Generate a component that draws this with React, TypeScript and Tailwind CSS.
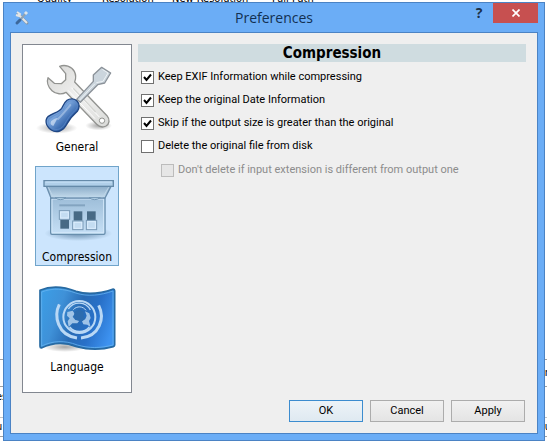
import { useState } from 'react'

const sections = [
  { name: 'General', Icon: ToolsIcon },
  { name: 'Compression', Icon: ScannerIcon },
  { name: 'Language', Icon: FlagIcon },
]

function ToolsIcon() {
  return (
    <svg viewBox="45 48 252 246" className="w-full" aria-hidden="true">
      <defs>
        <linearGradient id="handle" x1="0" y1="0" x2="1" y2="1">
          <stop offset="0" stopColor="#2c5a9c" />
          <stop offset="0.4" stopColor="#7aa5dc" />
          <stop offset="0.65" stopColor="#3a6bb0" />
          <stop offset="1" stopColor="#204a87" />
        </linearGradient>
        <linearGradient id="steel" x1="0" y1="0" x2="1" y2="1">
          <stop offset="0" stopColor="#d6d6d4" />
          <stop offset="0.5" stopColor="#f1f1f0" />
          <stop offset="1" stopColor="#d9dad8" />
        </linearGradient>
        <radialGradient id="toolShadow">
          <stop offset="0" stopColor="#000" stopOpacity="0.35" />
          <stop offset="1" stopColor="#000" stopOpacity="0" />
        </radialGradient>
      </defs>
      <ellipse cx="110" cy="264" rx="62" ry="17" fill="url(#toolShadow)" />
      <ellipse cx="236" cy="257" rx="40" ry="14" fill="url(#toolShadow)" />
      <path
        d="M119 79 C134 73 155 78 163 94 C169 106 168 116 164 126 L261 227 C271 239 268 252 258 258 C248 263 237 260 230 253 L138 157 C126 164 108 163 96 152 C83 140 80 124 84 113 L103 130 L124 131 L137 119 L137 101 Z"
        fill="url(#steel)"
        stroke="#929390"
        strokeWidth="4"
        strokeLinejoin="round"
      />
      <path d="M154 143 L238 231 M144 151 L225 236" stroke="#fff" strokeWidth="3" fill="none" />
      <path d="M160 145 L227 216" stroke="#d3d4d1" strokeWidth="4" fill="none" />
      <circle cx="246" cy="242" r="8" fill="#fff" stroke="#929390" strokeWidth="3" />
      <path
        d="M245 82 L272 99 L254 129 L233 134 L181 187 L170 178 L220 124 L220 105 Z"
        fill="#cbd5dd"
        stroke="#8b9299"
        strokeWidth="4"
        strokeLinejoin="round"
      />
      <path d="M247 88 L264 99 L249 124 L229 128 M225 131 L179 180" stroke="#edf2f5" strokeWidth="3" fill="none" />
      <path
        d="M141 181 C149 175 164 175 171 183 C179 191 179 204 172 214 C158 226 148 238 139 255 C130 272 110 281 94 270 C76 258 74 239 85 229 C100 219 117 216 125 205 C130 196 133 187 141 181 Z"
        fill="url(#handle)"
        stroke="#1f4684"
        strokeWidth="4"
      />
      <path
        d="M143 187 C151 180 163 181 168 188 C173 194 173 203 167 210 C152 223 143 236 134 252 C126 267 110 273 97 265 C82 256 82 243 89 235 C105 225 122 220 130 208 C135 198 136 193 143 187 Z"
        fill="none"
        stroke="#5e8ac8"
        strokeWidth="2"
      />
      <path d="M151 195 C137 212 129 222 114 237" fill="none" stroke="#c1d6f0" strokeWidth="6" strokeLinecap="round" opacity="0.5" />
      <path d="M94 243 C101 237 107 235 113 234 L100 258 C91 255 90 249 94 243 Z" fill="#e6f0fb" opacity="0.6" />
    </svg>
  )
}

function ScannerIcon() {
  return (
    <svg viewBox="45 33 252 246" className="w-full" aria-hidden="true">
      <defs>
        <linearGradient id="lid" x1="0" y1="0" x2="0" y2="1">
          <stop offset="0" stopColor="#8bacc8" />
          <stop offset="1" stopColor="#c5dced" />
        </linearGradient>
        <linearGradient id="glass" x1="0" y1="0" x2="0" y2="1">
          <stop offset="0" stopColor="#9dbdd8" />
          <stop offset="1" stopColor="#c6e0f6" />
        </linearGradient>
        <radialGradient id="scannerShadow">
          <stop offset="0" stopColor="#486f91" stopOpacity="0.75" />
          <stop offset="1" stopColor="#486f91" stopOpacity="0" />
        </radialGradient>
      </defs>
      <ellipse cx="175" cy="235" rx="102" ry="23" fill="url(#scannerShadow)" />
      <path d="M92 127 H255 V234 Q255 238 251 238 H96 Q92 238 92 234 Z" fill="url(#glass)" stroke="#688ead" strokeWidth="4" />
      <path d="M96 132 H251 V233 H96 Z" fill="none" stroke="#d3e8f9" strokeWidth="3" />
      <path d="M79 94 H273 L255 129 H93 Z" fill="url(#lid)" stroke="#6b8fae" strokeWidth="4" strokeLinejoin="round" />
      <path d="M85 97 L99 125 H249 L266 97" fill="none" stroke="#bdd6e9" strokeWidth="3" />
      <rect x="72" y="77" width="208" height="17" fill="#b0cfe9" stroke="#658aa9" strokeWidth="4" />
      <path d="M76 81 H276" stroke="#cce5fa" strokeWidth="3" />
      <path d="M105 128 Q121 140 138 128 Z M207 128 Q224 140 241 128 Z" fill="#b7d4ea" stroke="#7397b5" strokeWidth="3" />
      <path d="M118 151 H195" stroke="#83a4c0" strokeWidth="6" />
      <g fill="#486a85">
        <rect x="161" y="169" width="26" height="28" />
        <rect x="201" y="169" width="26" height="28" />
        <rect x="121" y="194" width="26" height="27" />
      </g>
      <g fill="#c3dcf1" stroke="#7899b5" strokeWidth="3">
        <rect x="118" y="167" width="31" height="26" />
        <rect x="158" y="198" width="31" height="26" />
        <rect x="199" y="196" width="31" height="28" />
      </g>
      <g fill="none" stroke="#dceefd" strokeWidth="3">
        <rect x="122" y="171" width="23" height="18" />
        <rect x="162" y="202" width="23" height="18" />
        <rect x="203" y="200" width="23" height="20" />
      </g>
    </svg>
  )
}

function FlagIcon() {
  return (
    <svg viewBox="45 18 252 246" className="w-full" aria-hidden="true">
      <defs>
        <linearGradient id="cloth" x1="0" y1="0.3" x2="1" y2="0.6">
          <stop offset="0" stopColor="#3c9ce4" />
          <stop offset="0.25" stopColor="#3f91d8" />
          <stop offset="0.5" stopColor="#286bb5" />
          <stop offset="0.72" stopColor="#2870c8" />
          <stop offset="1" stopColor="#3d92f0" />
        </linearGradient>
        <radialGradient id="flagShadow">
          <stop offset="0" stopColor="#000" stopOpacity="0.35" />
          <stop offset="1" stopColor="#000" stopOpacity="0" />
        </radialGradient>
      </defs>
      <ellipse cx="135" cy="231" rx="65" ry="15" fill="url(#flagShadow)" />
      <path
        d="M60 61 C95 46 132 50 168 64 C205 76 243 70 280 57 Q284 57 284 62 V225 Q284 229 280 230 C240 241 207 240 170 230 C132 215 98 217 64 234 Q60 234 60 229 Z"
        fill="url(#cloth)"
        stroke="#276aa2"
        strokeWidth="5"
        strokeLinejoin="round"
      />
      <path
        d="M65 66 C98 53 132 56 167 69 C204 81 242 76 279 63 V225 C240 235 207 235 172 225 C133 210 99 212 65 228 Z"
        fill="none"
        stroke="#65b3ef"
        strokeWidth="3"
        opacity="0.8"
      />
      <g fill="none" stroke="#b9d8f5">
        <path d="M118 103 C101 137 112 196 171 204" strokeWidth="9" />
        <path d="M236 106 C256 145 238 199 183 204" strokeWidth="9" />
        <circle cx="178" cy="141" r="48" strokeWidth="6" />
        <path d="M145 117 A38 38 0 0 1 211 120" strokeWidth="4" />
        <path d="M149 171 A38 38 0 0 0 208 171" strokeWidth="5" />
        <path d="M160 119 A24 24 0 0 1 198 121" strokeWidth="3" />
      </g>
      <g fill="#b4d2ef" opacity="0.85">
        <path d="M142 126 L158 122 L164 131 L158 140 L166 150 L178 152 L172 160 L157 160 L146 171 L143 154 L149 145 L141 137 Z" />
        <path d="M195 124 L208 130 L212 144 L207 153 L212 172 L202 164 L190 163 L186 154 L196 147 L200 137 Z" />
      </g>
      <path d="M164 125 L178 119 L191 126 L190 138 L195 146 L184 155 L169 149 L162 139 Z" fill="#2d6caf" />
    </svg>
  )
}

function TitleIcon() {
  return (
    <svg viewBox="0 0 16 16" className="size-4" aria-hidden="true">
      <path d="M4 4 L13 13" stroke="#8397a8" strokeWidth="3" strokeLinecap="round" />
      <path d="M3 2 L6 4 L5 6 L2 5 M4 4 L13 13" stroke="#e3e5e6" strokeWidth="2" fill="none" />
      <path d="M7 9 L12 3" stroke="#8fa3b5" strokeWidth="2" />
      <path d="M11 4 L13 2" stroke="#dce5eb" strokeWidth="3" />
      <path d="M3 13 L6 10" stroke="#3c689c" strokeWidth="3" strokeLinecap="round" />
    </svg>
  )
}

type OptionProps = {
  label: string
  checked: boolean
  disabled?: boolean
  onChange: () => void
}

function Option({ label, checked, disabled, onChange }: OptionProps) {
  return (
    <label
      className={
        disabled
          ? 'ml-5 mt-px flex items-center gap-1 text-[#8c8c8c]'
          : 'flex items-center gap-1 text-black'
      }
    >
      <span className="grid shrink-0">
        <input
          type="checkbox"
          checked={checked}
          disabled={disabled}
          onChange={onChange}
          className="peer col-start-1 row-start-1 size-[13px] appearance-none border border-[#707070] bg-white disabled:border-[#bcbcbc] disabled:bg-[#e6e6e6]"
        />
        <svg
          viewBox="0 0 13 13"
          className="pointer-events-none invisible col-start-1 row-start-1 size-[13px] peer-checked:visible"
          aria-hidden="true"
        >
          <path d="M3 6 L5.5 9 L10 3.5" fill="none" stroke="#000" strokeWidth="2" />
        </svg>
      </span>
      <span>{label}</span>
    </label>
  )
}

function ParentWindow() {
  return (
    <div
      className="absolute inset-0 flex flex-col justify-between overflow-hidden bg-white font-['DejaVu_Sans_Condensed','DejaVu_Sans',sans-serif] text-[11px] leading-3 text-black"
      aria-hidden="true"
    >
      <div className="-mt-[7px] grid grid-cols-[65px_70px_100px_auto] pl-[37px]">
        <span>Quality</span>
        <span>Resolution</span>
        <span>New Resolution</span>
        <span>Full Path</span>
      </div>
      <div className="h-[82px] border-t border-[#a0a0a0] bg-white">
        <div className="flex h-[27px] items-center justify-end border-b border-[#a0a0a0]">
          <span className="-mr-1">n</span>
        </div>
        <div className="flex h-[31px] border-b border-[#c4c4c4] pt-1">
          <span className="-ml-1">es</span>
        </div>
        <div className="flex h-[19px] items-center justify-between border-b border-[#a0a0a0]">
          <span className="-ml-1">u</span>
          <span className="-mr-1">u</span>
        </div>
      </div>
    </div>
  )
}

export default function App() {
  const [section, setSection] = useState('Compression')
  const [keepExif, setKeepExif] = useState(true)
  const [keepDate, setKeepDate] = useState(true)
  const [skipLarger, setSkipLarger] = useState(true)
  const [deleteOriginal, setDeleteOriginal] = useState(false)
  const [keepIfDifferent, setKeepIfDifferent] = useState(false)

  const buttonClass =
    'h-[22px] w-[74px] border border-[#acacac] bg-linear-to-b from-[#f1f1f1] to-[#e4e4e4]'

  return (
    <div className="relative flex min-h-screen flex-col pt-0.5 pr-[2px] pl-[3px] font-['Roboto',sans-serif] text-[11px] text-black">
      <ParentWindow />
      <div
        role="dialog"
        aria-labelledby="dialog-title"
        className="relative flex flex-1 flex-col border border-[#4b83c4] bg-[#6badf6] px-1.5 pb-1.5"
      >
        <header className="grid h-[29px] grid-cols-[1fr_auto_1fr] items-center">
          <div className="pl-1">
            <TitleIcon />
          </div>
          <h1 id="dialog-title" className="font-['Open_Sans',sans-serif] text-[14px] leading-5 text-[#123052]">
            Preferences
          </h1>
          <div className="flex items-start justify-end self-start">
            <button type="button" aria-label="Help" className="h-5 w-7 font-['Open_Sans',sans-serif] text-[14px] leading-5 font-bold text-[#1b3049]">
              ?
            </button>
            <button type="button" aria-label="Close" className="flex h-5 w-[45px] items-center justify-center bg-[#c75050]">
              <svg viewBox="0 0 8 8" className="size-2" aria-hidden="true">
                <path d="M0.5 0.5 L7.5 7.5 M7.5 0.5 L0.5 7.5" stroke="#fff" strokeWidth="1.7" />
              </svg>
            </button>
          </div>
        </header>

        <div className="flex flex-1 flex-col border border-[#4b83c4] bg-[#efefef] p-[11px]">
          <div className="flex flex-1 gap-1.5">
            <nav className="mb-[7px] flex w-[110px] shrink-0 flex-col items-center gap-2.5 border border-[#828790] bg-white pt-[11px]">
              {sections.map(({ name, Icon }) => (
                <button
                  key={name}
                  type="button"
                  onClick={() => setSection(name)}
                  className={
                    section === name
                      ? 'h-[100px] w-[84px] bg-[#cce5fd] outline -outline-offset-1 outline-[#70a4ca]'
                      : 'h-[100px] w-[84px]'
                  }
                >
                  <Icon />
                  <span className="block font-['DejaVu_Sans_Condensed','DejaVu_Sans',sans-serif] text-[12px] leading-[18px]">{name}</span>
                </button>
              ))}
            </nav>

            <main className="flex-1">
              <h2 className="bg-[#cfdce0] text-center font-['DejaVu_Sans_Condensed','DejaVu_Sans',sans-serif] text-[15px] leading-[18px] font-bold">
                {section}
              </h2>
              <div className="flex flex-col gap-[7px] pt-[7px] pl-[3px] leading-4">
                <Option label="Keep EXIF Information while compressing" checked={keepExif} onChange={() => setKeepExif(!keepExif)} />
                <Option label="Keep the original Date Information" checked={keepDate} onChange={() => setKeepDate(!keepDate)} />
                <Option label="Skip if the output size is greater than the original" checked={skipLarger} onChange={() => setSkipLarger(!skipLarger)} />
                <Option label="Delete the original file from disk" checked={deleteOriginal} onChange={() => setDeleteOriginal(!deleteOriginal)} />
                <Option
                  label="Don't delete if input extension is different from output one"
                  checked={keepIfDifferent}
                  disabled={!deleteOriginal}
                  onChange={() => setKeepIfDifferent(!keepIfDifferent)}
                />
              </div>
            </main>
          </div>

          <footer className="flex justify-end gap-[7px] pr-px">
            <button type="submit" className="h-[22px] w-[74px] border border-[#3c8ccf] bg-linear-to-b from-[#edf3f8] to-[#dfe9f1]">
              OK
            </button>
            <button type="button" className={buttonClass}>
              Cancel
            </button>
            <button type="button" className={buttonClass}>
              Apply
            </button>
          </footer>
        </div>
      </div>
    </div>
  )
}
